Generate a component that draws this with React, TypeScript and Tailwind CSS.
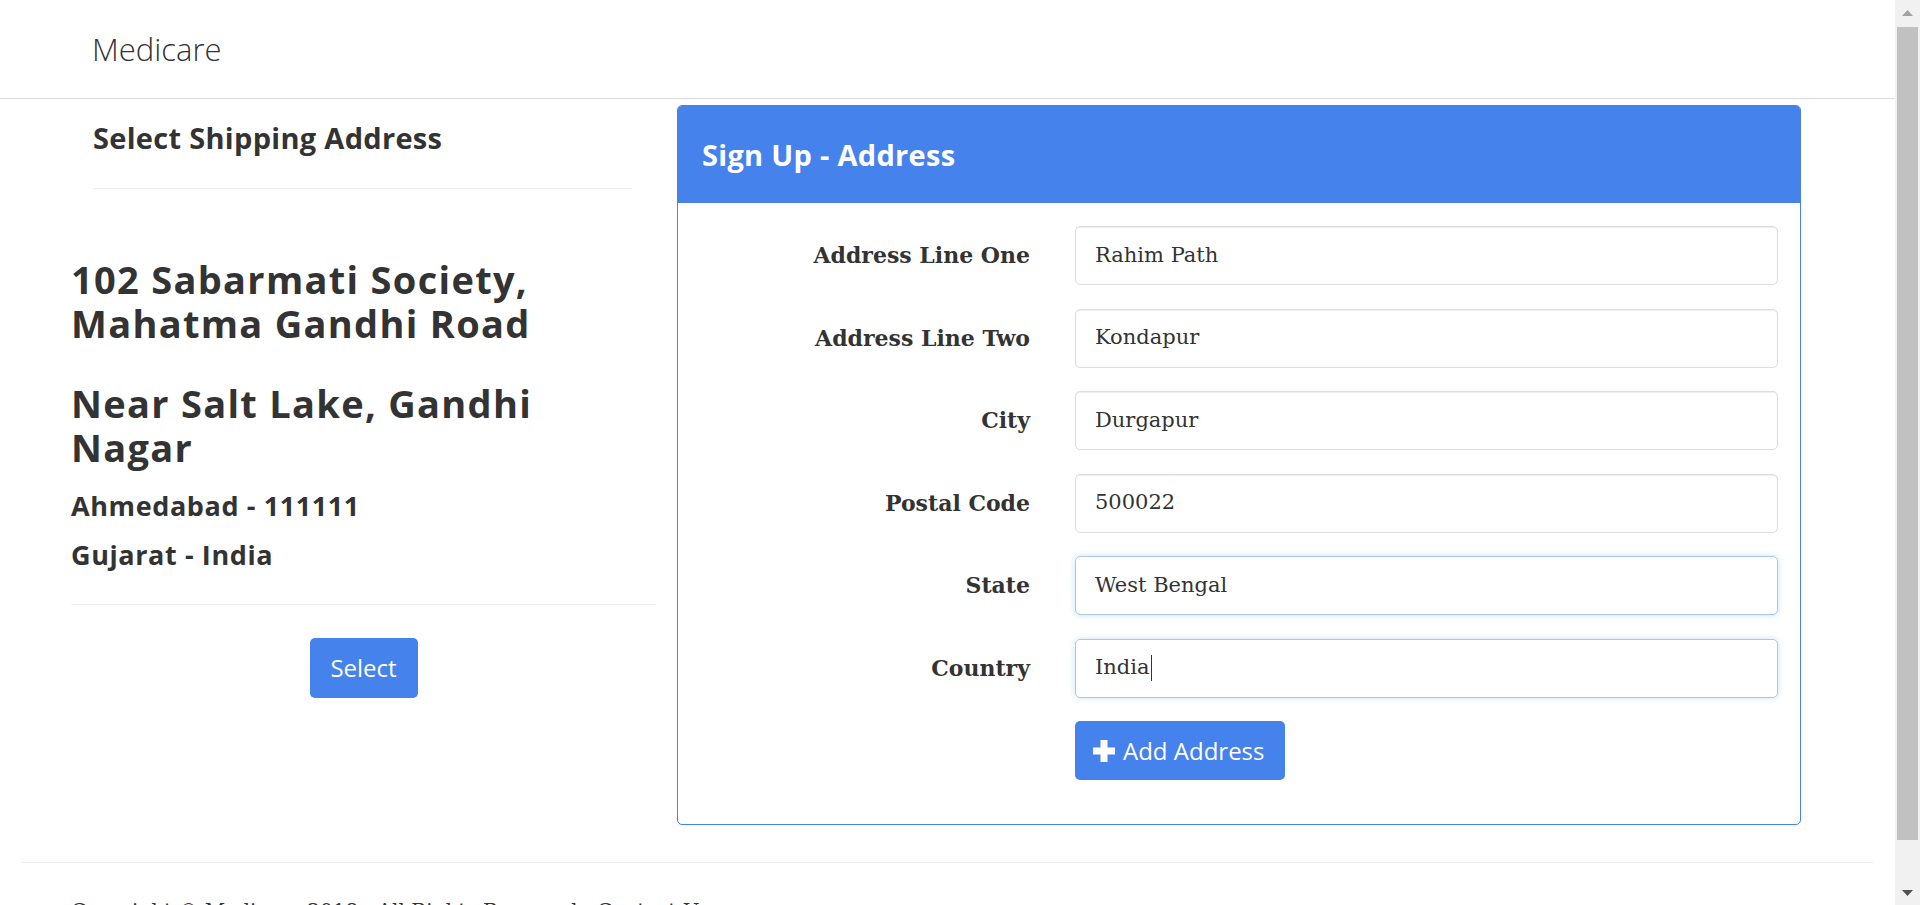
const heading = "font-['Open_Sans','Lato',sans-serif]";
const serif = "font-['DejaVu_Serif','Liberation_Serif',serif]";

const fields = [
  { label: "Address Line One", value: "Rahim Path", focus: false },
  { label: "Address Line Two", value: "Kondapur", focus: false },
  { label: "City", value: "Durgapur", focus: false },
  { label: "Postal Code", value: "500022", focus: false },
  { label: "State", value: "West Bengal", focus: true },
  { label: "Country", value: "India", focus: true },
];

function PlusIcon() {
  return (
    <svg width="22" height="22" viewBox="0 0 22 22" className="shrink-0 fill-white">
      <path d="M7.5 0h7v7.5H22v7h-7.5V22h-7v-7.5H0v-7h7.5z" />
    </svg>
  );
}

function ScrollBar() {
  return (
    <div className="fixed right-0 top-0 flex h-screen w-[25px] flex-col bg-[#f1f1f1]">
      <div className="flex h-[25px] items-center justify-center">
        <svg width="11" height="6" viewBox="0 0 11 6" className="fill-[#a3a3a3]">
          <path d="M5.5 0L11 6H0z" />
        </svg>
      </div>
      <div className="mx-[2px] mt-[2px] h-[813px] bg-[#c1c1c1]" />
      <div className="flex-1" />
      <div className="flex h-[25px] items-center justify-center">
        <svg width="11" height="6" viewBox="0 0 11 6" className="fill-[#505050]">
          <path d="M0 0h11L5.5 6z" />
        </svg>
      </div>
    </div>
  );
}

export default function App() {
  return (
    <div className="min-h-[960px] bg-white text-[#333333]">
      <nav className="flex h-[99px] items-center border-b border-[#dddddd] pl-[92px]">
        <span className={`${heading} text-[31px] font-light`}>Medicare</span>
      </nav>

      <div className="flex items-start pl-[71px] pt-[6px]">
        {/* shipping address column */}
        <div className="w-[585px]">
          <div className="pl-[22px] pr-[24px] pt-[17px]">
            <h3 className={`${heading} text-[29px] font-bold leading-[32px] tracking-[0.3px]`}>Select Shipping Address</h3>
            <div className="mt-[34px] border-t border-[#eeeeee]" />
          </div>
          <div className={`${heading} mt-[68px] w-[545px] font-bold`}>
            <h2 className="text-[38px] leading-[44px] tracking-[1.3px]">102 Sabarmati Society, Mahatma Gandhi Road</h2>
            <h2 className="mt-[36px] text-[38px] leading-[44px] tracking-[1.3px]">Near Salt Lake, Gandhi Nagar</h2>
            <h4 className="mt-[22px] text-[27px] leading-[30px] tracking-[0.6px]">Ahmedabad - 111111</h4>
            <h4 className="mt-[19px] text-[27px] leading-[30px] tracking-[0.6px]">Gujarat - India</h4>
          </div>
          <div className="mt-[34px] border-t border-[#eeeeee]" />
          <div className="mt-[33px] flex justify-center">
            <button className={`${heading} h-[60px] w-[108px] rounded-[5px] bg-[#4582ec] text-[24px] text-white`}>
              Select
            </button>
          </div>
        </div>

        {/* sign up form card */}
        <div className="ml-[21px] w-[1124px] overflow-hidden rounded-[5px] border border-[#4582ec]">
          <div className="flex h-[97px] items-center bg-[#4582ec] px-[24px]">
            <h3 className={`${heading} text-[29px] font-bold tracking-[0.3px] text-white`}>Sign Up - Address</h3>
          </div>
          <div className="flex flex-col gap-[23.5px] pb-[44px] pr-[22px] pt-[23px]">
            {fields.map((f) => (
              <div key={f.label} className="flex items-center">
                <label className={`${serif} w-[352px] text-right text-[22px] font-bold`}>{f.label}</label>
                <div
                  className={`ml-[45px] flex h-[59px] flex-1 items-center rounded-[5px] border px-[19px] ${serif} text-[21px] ${
                    f.focus
                      ? "border-[#a9c7ee] shadow-[0_0_6px_rgba(102,175,233,0.35)]"
                      : "border-[#dddddd] shadow-[inset_0_1px_1px_rgba(0,0,0,0.075)]"
                  }`}
                >
                  {f.value}
                  {f.label === "Country" && <span className="ml-[1px] h-[26px] w-[1px] bg-[#333333]" />}
                </div>
              </div>
            ))}
            <div className="flex">
              <button
                className={`${heading} ml-[397px] flex h-[59px] w-[210px] items-center gap-[8px] rounded-[5px] bg-[#4582ec] pl-[18px] text-[24px] text-white`}
              >
                <PlusIcon />
                Add Address
              </button>
            </div>
          </div>
        </div>
      </div>

      <footer className="ml-[22px] mr-[47px] mt-[37px] border-t border-[#eeeeee]">
        <p className={`${serif} mt-[36px] pl-[49px] text-[20px] leading-[25px]`}>
          Copyright © Medicare 2018 - All Rights Reserved - Contact Us
        </p>
      </footer>

      <ScrollBar />
    </div>
  );
}
